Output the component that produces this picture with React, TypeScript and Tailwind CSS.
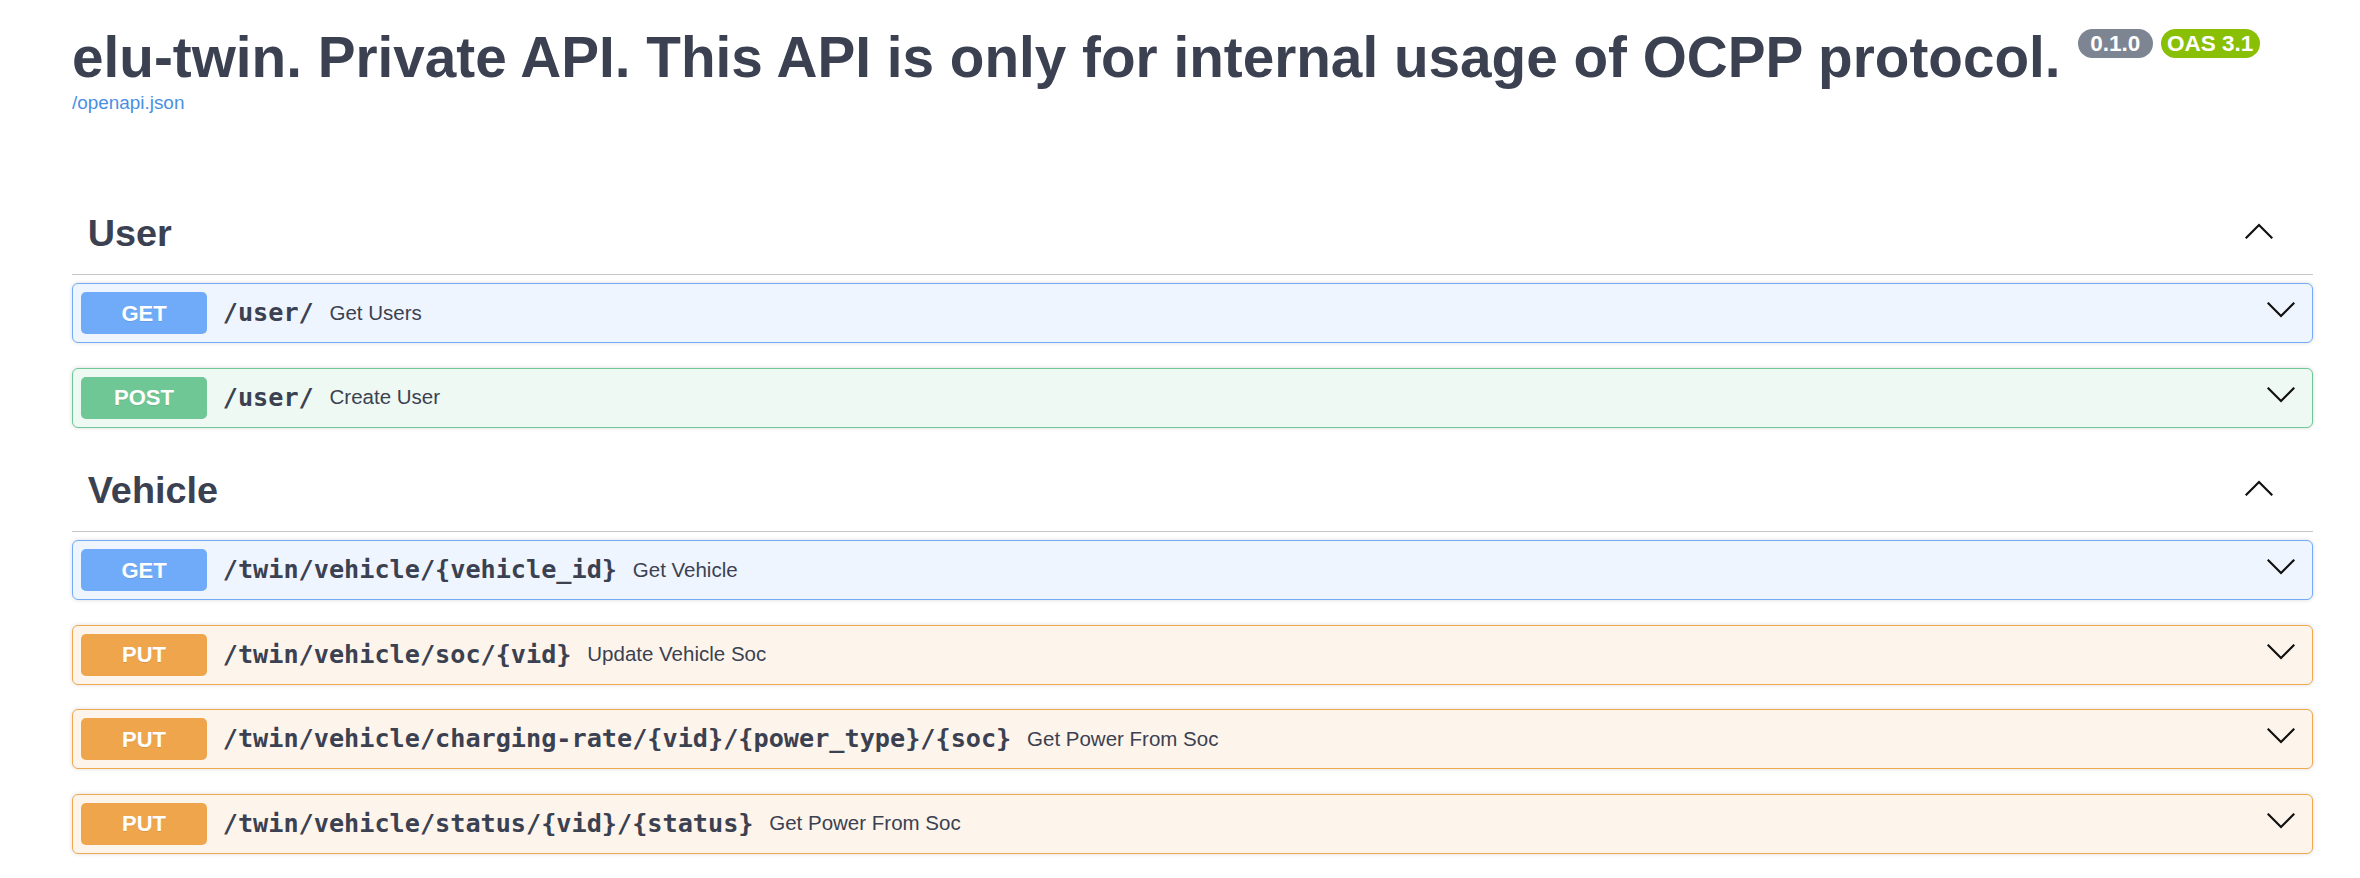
import React from 'react';

type Method = 'GET' | 'POST' | 'PUT';

interface Operation {
  method: Method;
  path: string;
  summary: string;
}

interface TagSection {
  name: string;
  operations: Operation[];
}

const sections: TagSection[] = [
  {
    name: 'User',
    operations: [
      { method: 'GET', path: '/user/', summary: 'Get Users' },
      { method: 'POST', path: '/user/', summary: 'Create User' },
    ],
  },
  {
    name: 'Vehicle',
    operations: [
      { method: 'GET', path: '/twin/vehicle/{vehicle_id}', summary: 'Get Vehicle' },
      { method: 'PUT', path: '/twin/vehicle/soc/{vid}', summary: 'Update Vehicle Soc' },
      {
        method: 'PUT',
        path: '/twin/vehicle/charging-rate/{vid}/{power_type}/{soc}',
        summary: 'Get Power From Soc',
      },
      { method: 'PUT', path: '/twin/vehicle/status/{vid}/{status}', summary: 'Get Power From Soc' },
    ],
  },
];

// colour sets per http method
const methodStyles: Record<Method, { block: string; badge: string }> = {
  GET: { block: 'bg-[#eff5fe] border-[#73abf6]', badge: 'bg-[#6fabf8]' },
  POST: { block: 'bg-[#eef9f3] border-[#70c796]', badge: 'bg-[#6ec794]' },
  PUT: { block: 'bg-[#fdf5eb] border-[#f0a94f]', badge: 'bg-[#eea54b]' },
};

const Chevron = ({ up = false, className = '' }: { up?: boolean; className?: string }) => (
  <svg width="28" height="16" viewBox="0 0 28 16" className={className} fill="none">
    <path
      d={up ? 'M1.5 14.5 L14 2 L26.5 14.5' : 'M1.5 1.5 L14 14 L26.5 1.5'}
      stroke="#111"
      strokeWidth="2.2"
      strokeLinecap="square"
    />
  </svg>
);

const OpBlock = ({ op }: { op: Operation }) => {
  const s = methodStyles[op.method];
  return (
    <div
      className={`flex items-center mb-[24.5px] h-[60px] border rounded-[6px] p-[8px] pr-[17px] shadow-[0_0_4px_rgba(0,0,0,0.15)] ${s.block}`}
    >
      <span
        className={`flex items-center justify-center w-[126px] h-[42px] shrink-0 rounded-[5px] text-white font-bold text-[22px] [text-shadow:0_1px_0_rgba(0,0,0,0.1)] ${s.badge}`}
      >
        {op.method}
      </span>
      <span className="px-[15.75px] font-['DejaVu_Sans_Mono',monospace] font-bold text-[25.2px] text-[#3b4151] whitespace-nowrap">
        {op.path}
      </span>
      <span className="text-[20.5px] text-[#3b4151] whitespace-nowrap">{op.summary}</span>
      <div className="flex-1" />
      <Chevron className="mb-[6px]" />
    </div>
  );
};

export default function App() {
  return (
    <div className="min-h-screen bg-white font-['Liberation_Sans',Arial,sans-serif] text-[#3b4151] pt-[25px]">
      <div className="ml-[72px] w-[2241px]">
        {/* info header */}
        <div className="flex items-start">
          <h2 className="text-[56.7px] leading-[65px] font-bold whitespace-nowrap">
            elu-twin. Private API. This API is only for internal usage of OCPP protocol.
          </h2>
          <div className="flex gap-[8px] ml-[17px] mt-[4px]">
            <span className="flex items-center h-[29px] px-[6.3px] rounded-full bg-[#7d8492] text-white font-bold text-[22.5px] whitespace-pre">
              {' 0.1.0 '}
            </span>
            <span className="flex items-center h-[29px] px-[6.3px] rounded-full bg-[#89bf04] text-white font-bold text-[22.5px] whitespace-pre">
              OAS 3.1
            </span>
          </div>
        </div>
        <a className="block mt-[1.5px] text-[18.9px] leading-[22px] text-[#4990e2]">/openapi.json</a>

        {/* tag sections */}
        <div className="mt-[81.5px]">
          {sections.map((section) => (
            <div key={section.name}>
              <div className="flex items-center pt-[13px] pb-[16px] pl-[15.75px] pr-[40px] mb-[8px] border-b border-[rgba(59,65,81,0.3)]">
                <div className="flex items-center h-[50px] flex-1">
                  <h3 className="text-[37.8px] leading-[44px] font-bold">{section.name}</h3>
                  <div className="flex-1" />
                  <Chevron up className="mb-[5px]" />
                </div>
              </div>
              {section.operations.map((op, i) => (
                <OpBlock key={i} op={op} />
              ))}
            </div>
          ))}
        </div>
      </div>
    </div>
  );
}
